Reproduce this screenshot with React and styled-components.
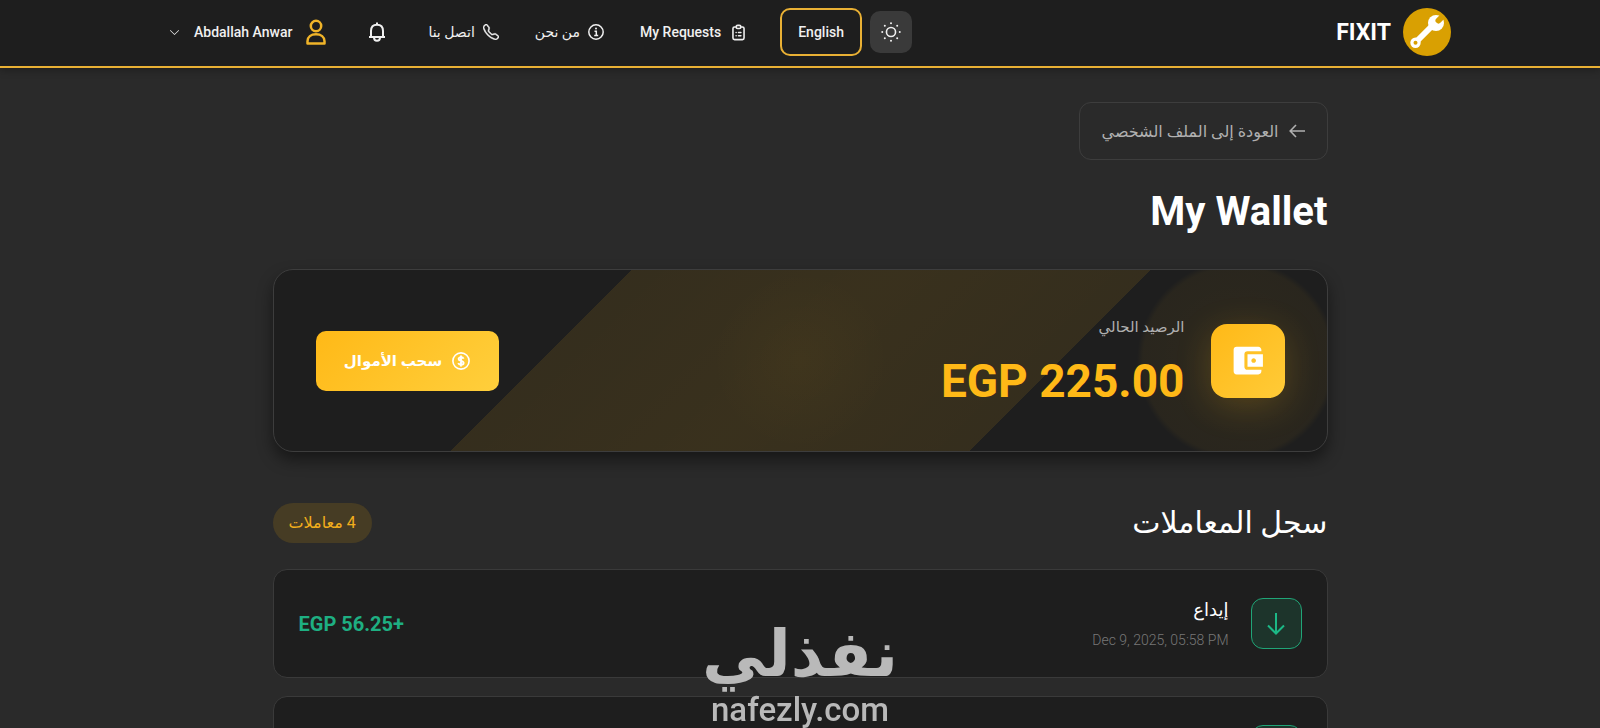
import React from "react";
import styled, { createGlobalStyle } from "styled-components";
import { BsChevronDown, BsTelephone } from "react-icons/bs";
import { HiOutlineClipboardList } from "react-icons/hi";
import { MdAccountBalanceWallet } from "react-icons/md";

const transactions = [
  { id: 1, title: "إيداع", date: "Dec 9, 2025, 05:58 PM", amount: "+56.25 EGP" },
  { id: 2, title: "إيداع", date: "Dec 9, 2025, 05:58 PM", amount: "+56.25 EGP" },
];

const WrenchLogo = () => (
  <svg width="48" height="48" viewBox="0 0 48 48" aria-hidden="true">
    <circle cx="24" cy="24" r="24" fill="#d9a002" />
    <path d="M12.500 34.500 31 16" stroke="#fff" strokeWidth="6" />
    <circle cx="12.500" cy="34.800" r="5.200" fill="#fff" />
    <circle cx="12.500" cy="34.800" r="2" fill="#d9a002" />
    <circle cx="33" cy="15" r="8" fill="#fff" />
    <path d="M35.500 12.500 38.500 9.500" stroke="#d9a002" strokeWidth="6" strokeLinecap="round" />
  </svg>
);

const SunIcon = () => (
  <svg width="20" height="20" viewBox="0 0 22 22" fill="currentColor" aria-hidden="true">
    <circle cx="11" cy="11" r="5" fill="none" stroke="currentColor" strokeWidth="1.800" />
    <circle cx="11" cy="1.400" r="1.100" />
    <circle cx="11" cy="20.600" r="1.100" />
    <circle cx="1.400" cy="11" r="1.100" />
    <circle cx="20.600" cy="11" r="1.100" />
    <circle cx="4.200" cy="4.200" r="1.100" />
    <circle cx="17.800" cy="4.200" r="1.100" />
    <circle cx="4.200" cy="17.800" r="1.100" />
    <circle cx="17.800" cy="17.800" r="1.100" />
  </svg>
);

const UserIcon = () => (
  <svg width="20" height="26" viewBox="0 0 20 26" fill="none" stroke="#f0b429" strokeWidth="2.500" aria-hidden="true">
    <circle cx="10" cy="7" r="5.200" />
    <path d="M1.500 24.500v-2.200c0-4.500 3.500-7 8.500-7s8.500 2.500 8.500 7v2.200z" strokeLinejoin="round" />
  </svg>
);

const BellIcon = () => (
  <svg width="18" height="20" viewBox="0 0 18 20" fill="none" stroke="currentColor" strokeWidth="2" aria-hidden="true">
    <path d="M9 .5v2M1 15h16M3 15V9c0-3.800 2.300-6.300 6-6.300S15 5.200 15 9v6" strokeLinejoin="round" />
    <path d="M6 15.500c0 2 1.200 3.200 3 3.200s3-1.200 3-3.200" />
  </svg>
);

const InfoIcon = () => (
  <svg width="16" height="16" viewBox="0 0 16 16" fill="none" stroke="currentColor" strokeWidth="1.500" aria-hidden="true">
    <circle cx="8" cy="8" r="7.200" />
    <path d="M6.500 7.300h1.800v4M6.200 11.500h4" />
    <circle cx="8" cy="4.600" r="1" fill="currentColor" stroke="none" />
  </svg>
);

const CoinIcon = () => (
  <svg width="18" height="18" viewBox="0 0 18 18" fill="none" stroke="currentColor" aria-hidden="true">
    <circle cx="9" cy="9" r="8.100" strokeWidth="1.600" />
    <path d="M11.500 6.800c-.3-1-1.200-1.500-2.500-1.500s-2.400.6-2.400 1.700c0 2.500 5 1.200 5 3.900 0 1.200-1.100 1.800-2.600 1.800s-2.400-.6-2.700-1.700M9 3.600v10.800" strokeWidth="1.900" />
  </svg>
);

const ArrowBack = () => (
  <svg width="16" height="14" viewBox="0 0 16 14" fill="none" stroke="currentColor" strokeWidth="1.600" aria-hidden="true">
    <path d="M16 7H1.200M7 1 1.200 7 7 13" />
  </svg>
);

const ArrowDown = () => (
  <svg width="18" height="22" viewBox="0 0 18 22" fill="none" stroke="currentColor" strokeWidth="2" aria-hidden="true">
    <path d="M9 0v21M1 12.500l8 8 8-8" />
  </svg>
);

const App = () => {
  return (
    <>
      <GlobalStyle />
      <Page dir="rtl">
        <Header>
          <HeaderInner>
            <Brand href="#">
              <WrenchLogo />
              <span>FIXIT</span>
            </Brand>
            <Nav>
              <ThemeButton aria-label="Toggle theme">
                <SunIcon />
              </ThemeButton>
              <LanguageButton>English</LanguageButton>
              <NavLinks>
                <NavLink href="#">
                  <HiOutlineClipboardList size={19} />
                  My Requests
                </NavLink>
                <NavLink href="#">
                  <InfoIcon />
                  من نحن
                </NavLink>
                <NavLink href="#">
                  <BsTelephone size={16} strokeWidth={0.5} />
                  اتصل بنا
                </NavLink>
              </NavLinks>
              <BellButton aria-label="Notifications">
                <BellIcon />
              </BellButton>
              <UserButton>
                <UserIcon />
                <span>Abdallah Anwar</span>
                <BsChevronDown size={11} />
              </UserButton>
            </Nav>
          </HeaderInner>
        </Header>

        <Main>
          <BackLink href="#">
            <ArrowBack />
            العودة إلى الملف الشخصي
          </BackLink>
          <Title>My Wallet</Title>

          <BalanceCard>
            <Balance>
              <WalletBadge>
                <MdAccountBalanceWallet size={37} />
              </WalletBadge>
              <BalanceText>
                <BalanceLabel>الرصيد الحالي</BalanceLabel>
                <Amount dir="ltr">EGP 225.00</Amount>
              </BalanceText>
            </Balance>
            <WithdrawButton>
              <CoinIcon />
              سحب الأموال
            </WithdrawButton>
          </BalanceCard>

          <HistoryHeader>
            <h2>سجل المعاملات</h2>
            <Count>4 معاملات</Count>
          </HistoryHeader>
          <TransactionList>
            {transactions.map((item) => (
              <Transaction key={item.id}>
                <DepositBadge>
                  <ArrowDown />
                </DepositBadge>
                <Details>
                  <h3>{item.title}</h3>
                  <time dir="ltr">{item.date}</time>
                </Details>
                <Deposit>{item.amount}</Deposit>
              </Transaction>
            ))}
          </TransactionList>
        </Main>

        <Watermark>
          <WatermarkName>نفذلي</WatermarkName>
          <WatermarkSite dir="ltr">nafezly.com</WatermarkSite>
        </Watermark>
      </Page>
    </>
  );
};

export default App;

const GlobalStyle = createGlobalStyle`
  * {
    box-sizing: border-box;
  }
  body {
    margin: 0;
    background: #2a2a2a;
    font-family: Roboto, "DejaVu Sans", sans-serif;
  }
  h1, h2, h3, p {
    margin: 0;
  }
  button {
    font-family: inherit;
    border: none;
    background: none;
    padding: 0;
    cursor: pointer;
  }
  a {
    text-decoration: none;
  }
  ul {
    margin: 0;
    padding: 0;
    list-style: none;
  }
`;

const Page = styled.div`
  min-height: 100vh;
  color: #fff;
`;

const Header = styled.header`
  background: #1e1e1e;
  border-bottom: 2px solid #e9b034;
  box-shadow: 0 2px 8px rgba(0, 0, 0, 0.3);
`;

const HeaderInner = styled.div`
  max-width: 1302px;
  margin: 0 auto;
  padding: 8px 0 10px;
  display: flex;
  align-items: center;
  justify-content: space-between;
`;

const Brand = styled.a`
  display: flex;
  align-items: center;
  gap: 12px;
  color: #fff;
  font-size: 23px;
  font-weight: 700;
`;

const Nav = styled.nav`
  display: flex;
  align-items: center;
`;

const ThemeButton = styled.button`
  width: 42px;
  height: 42px;
  display: flex;
  align-items: center;
  justify-content: center;
  border-radius: 10px;
  background: #3a3a3a;
  color: #f0f0f0;
`;

const LanguageButton = styled.button`
  height: 48px;
  margin: 0 8px 0 32px;
  padding: 0 16px;
  border: 2px solid #e9b034;
  border-radius: 10px;
  color: #f0f0f0;
  font-size: 14px;
  font-weight: 500;
`;

const NavLinks = styled.div`
  display: flex;
  gap: 36px;
`;

const NavLink = styled.a`
  display: flex;
  align-items: center;
  gap: 8px;
  color: #f0f0f0;
  font-size: 14px;
  font-weight: 500;
`;

const BellButton = styled.button`
  display: flex;
  margin: 0 42px;
  color: #f0f0f0;
`;

const UserButton = styled.button`
  display: flex;
  align-items: center;
  gap: 14px;
  padding-left: 20px;
  color: #f0f0f0;
  font-size: 14px;
  font-weight: 500;
`;

const Main = styled.main`
  max-width: 1103px;
  margin: 0 auto;
  padding: 34px 24px;
`;

const BackLink = styled.a`
  display: inline-flex;
  align-items: center;
  gap: 10px;
  height: 58px;
  padding: 0 22px;
  border: 1px solid #3d3d3d;
  border-radius: 12px;
  color: #b0b0b0;
  font-size: 16px;
`;

const Title = styled.h1`
  margin: 25px 0 30px;
  font-size: 40px;
  line-height: 54px;
  font-weight: 700;
`;

const BalanceCard = styled.section`
  min-height: 183px;
  padding: 0 42px;
  display: flex;
  align-items: center;
  justify-content: space-between;
  border: 1px solid #3d3d3d;
  border-radius: 20px;
  background:
    radial-gradient(circle 100px at calc(100% - 90px) 50%, rgba(255, 185, 23, 0.07), rgba(255, 185, 23, 0.05) 94%, transparent),
    radial-gradient(circle 90px at 50% 50%, rgba(255, 185, 23, 0.03), transparent),
    linear-gradient(135deg, transparent 29%, rgba(255, 185, 23, 0.1) 29%, rgba(255, 185, 23, 0.12) 50%, rgba(255, 185, 23, 0.1) 71%, transparent 71%),
    #1e1e1e;
  box-shadow: 0 8px 16px rgba(0, 0, 0, 0.45);
`;

const Balance = styled.div`
  display: flex;
  align-items: center;
  gap: 26px;
`;

const WalletBadge = styled.div`
  width: 74px;
  height: 74px;
  display: flex;
  align-items: center;
  justify-content: center;
  border-radius: 16px;
  background: linear-gradient(135deg, #ffb917, #ffcb38);
  box-shadow: 0 8px 36px rgba(255, 185, 23, 0.2);
`;

const BalanceText = styled.div`
  padding-top: 4px;
`;

const BalanceLabel = styled.p`
  color: #b0b0b0;
  font-size: 15px;
  line-height: 24px;
`;

const Amount = styled.p`
  margin-top: 12px;
  color: #ffb917;
  font-size: 46px;
  line-height: 60px;
  font-weight: 700;
`;

const WithdrawButton = styled.button`
  min-width: 183px;
  height: 60px;
  padding: 0 24px;
  display: flex;
  align-items: center;
  justify-content: center;
  gap: 10px;
  border-radius: 10px;
  background: linear-gradient(135deg, #ffb917, #ffcf3c);
  color: #fff;
  font-size: 15px;
  font-weight: 700;
`;

const HistoryHeader = styled.div`
  margin: 51px 0 26px;
  display: flex;
  align-items: center;
  justify-content: space-between;

  h2 {
    font-size: 30px;
    line-height: 40px;
    font-weight: 500;
  }
`;

const Count = styled.span`
  padding: 0 16px;
  border-radius: 20px;
  background: #463c24;
  color: #f2ae1c;
  font-size: 16px;
  line-height: 40px;
`;

const TransactionList = styled.ul`
  display: flex;
  flex-direction: column;
  gap: 18px;
`;

const Transaction = styled.li`
  min-height: 109px;
  padding: 0 25px;
  display: flex;
  align-items: center;
  gap: 22px;
  border: 1px solid #3a3a3a;
  border-radius: 14px;
  background: #1e1e1e;
`;

const DepositBadge = styled.div`
  width: 51px;
  height: 51px;
  display: flex;
  align-items: center;
  justify-content: center;
  border: 1px solid #20a577;
  border-radius: 12px;
  background: #1d342b;
  color: #1cb886;
`;

const Details = styled.div`
  flex: 1;
  padding-top: 2px;

  h3 {
    font-size: 18px;
    line-height: 30px;
    font-weight: 500;
  }
  time {
    display: block;
    color: #777;
    font-size: 14px;
    line-height: 30px;
    font-weight: 300;
    text-align: right;
  }
`;

const Deposit = styled.span`
  color: #1eaf82;
  font-size: 20px;
  font-weight: 700;
`;

const Watermark = styled.div`
  position: fixed;
  bottom: 0;
  left: 0;
  right: 0;
  display: flex;
  flex-direction: column;
  align-items: center;
  color: #b9b9b9;
  font-weight: 700;
  pointer-events: none;
`;

const WatermarkName = styled.span`
  font-size: 64px;
  line-height: 74px;
`;

const WatermarkSite = styled.span`
  font-size: 33px;
  line-height: 36px;
  font-weight: 500;
`;
